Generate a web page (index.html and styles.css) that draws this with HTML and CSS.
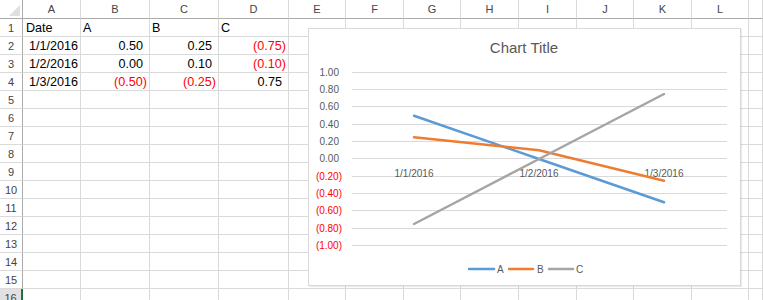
FILE: index.html
```html
<!DOCTYPE html>
<html>
<head>
<meta charset="utf-8">
<link rel="stylesheet" href="styles.css">
</head>
<body>
<div class="sheet">
  <div class="grid">
    <div class="corner"></div><div class="ch">A</div><div class="ch">B</div><div class="ch">C</div><div class="ch">D</div><div class="ch">E</div><div class="ch">F</div><div class="ch">G</div><div class="ch">H</div><div class="ch">I</div><div class="ch">J</div><div class="ch">K</div><div class="ch">L</div><div class="ch"></div>

    <div class="rh">1</div><div class="c l">Date</div><div class="c l tight">A</div><div class="c l tight">B</div><div class="c l tight">C</div><div class="c"></div><div class="c"></div><div class="c"></div><div class="c"></div><div class="c"></div><div class="c"></div><div class="c"></div><div class="c"></div><div class="c"></div>

    <div class="rh">2</div><div class="c r">1/1/2016</div><div class="c r pos">0.50</div><div class="c r pos">0.25</div><div class="c r neg">(0.75)</div><div class="c"></div><div class="c"></div><div class="c"></div><div class="c"></div><div class="c"></div><div class="c"></div><div class="c"></div><div class="c"></div><div class="c"></div>

    <div class="rh">3</div><div class="c r">1/2/2016</div><div class="c r pos">0.00</div><div class="c r pos">0.10</div><div class="c r neg">(0.10)</div><div class="c"></div><div class="c"></div><div class="c"></div><div class="c"></div><div class="c"></div><div class="c"></div><div class="c"></div><div class="c"></div><div class="c"></div>

    <div class="rh">4</div><div class="c r">1/3/2016</div><div class="c r neg">(0.50)</div><div class="c r neg">(0.25)</div><div class="c r pos">0.75</div><div class="c"></div><div class="c"></div><div class="c"></div><div class="c"></div><div class="c"></div><div class="c"></div><div class="c"></div><div class="c"></div><div class="c"></div>

    <div class="rh">5</div><div class="c"></div><div class="c"></div><div class="c"></div><div class="c"></div><div class="c"></div><div class="c"></div><div class="c"></div><div class="c"></div><div class="c"></div><div class="c"></div><div class="c"></div><div class="c"></div><div class="c"></div>
    <div class="rh">6</div><div class="c"></div><div class="c"></div><div class="c"></div><div class="c"></div><div class="c"></div><div class="c"></div><div class="c"></div><div class="c"></div><div class="c"></div><div class="c"></div><div class="c"></div><div class="c"></div><div class="c"></div>
    <div class="rh">7</div><div class="c"></div><div class="c"></div><div class="c"></div><div class="c"></div><div class="c"></div><div class="c"></div><div class="c"></div><div class="c"></div><div class="c"></div><div class="c"></div><div class="c"></div><div class="c"></div><div class="c"></div>
    <div class="rh">8</div><div class="c"></div><div class="c"></div><div class="c"></div><div class="c"></div><div class="c"></div><div class="c"></div><div class="c"></div><div class="c"></div><div class="c"></div><div class="c"></div><div class="c"></div><div class="c"></div><div class="c"></div>
    <div class="rh">9</div><div class="c"></div><div class="c"></div><div class="c"></div><div class="c"></div><div class="c"></div><div class="c"></div><div class="c"></div><div class="c"></div><div class="c"></div><div class="c"></div><div class="c"></div><div class="c"></div><div class="c"></div>
    <div class="rh">10</div><div class="c"></div><div class="c"></div><div class="c"></div><div class="c"></div><div class="c"></div><div class="c"></div><div class="c"></div><div class="c"></div><div class="c"></div><div class="c"></div><div class="c"></div><div class="c"></div><div class="c"></div>
    <div class="rh">11</div><div class="c"></div><div class="c"></div><div class="c"></div><div class="c"></div><div class="c"></div><div class="c"></div><div class="c"></div><div class="c"></div><div class="c"></div><div class="c"></div><div class="c"></div><div class="c"></div><div class="c"></div>
    <div class="rh">12</div><div class="c"></div><div class="c"></div><div class="c"></div><div class="c"></div><div class="c"></div><div class="c"></div><div class="c"></div><div class="c"></div><div class="c"></div><div class="c"></div><div class="c"></div><div class="c"></div><div class="c"></div>
    <div class="rh">13</div><div class="c"></div><div class="c"></div><div class="c"></div><div class="c"></div><div class="c"></div><div class="c"></div><div class="c"></div><div class="c"></div><div class="c"></div><div class="c"></div><div class="c"></div><div class="c"></div><div class="c"></div>
    <div class="rh">14</div><div class="c"></div><div class="c"></div><div class="c"></div><div class="c"></div><div class="c"></div><div class="c"></div><div class="c"></div><div class="c"></div><div class="c"></div><div class="c"></div><div class="c"></div><div class="c"></div><div class="c"></div>
    <div class="rh">15</div><div class="c"></div><div class="c"></div><div class="c"></div><div class="c"></div><div class="c"></div><div class="c"></div><div class="c"></div><div class="c"></div><div class="c"></div><div class="c"></div><div class="c"></div><div class="c"></div><div class="c"></div>
    <div class="rh sel">16</div><div class="c"></div><div class="c"></div><div class="c"></div><div class="c"></div><div class="c"></div><div class="c"></div><div class="c"></div><div class="c"></div><div class="c"></div><div class="c"></div><div class="c"></div><div class="c"></div><div class="c"></div>
  </div>

  <div class="chart">
    <svg class="chart-svg" width="431" height="256" viewBox="0 0 431 256">
      <text class="title" x="215" y="23.5" text-anchor="middle">Chart Title</text>
      <g class="gridlines">
        <line x1="43" x2="418" y1="43.5" y2="43.5"/>
        <line x1="43" x2="418" y1="60.5" y2="60.5"/>
        <line x1="43" x2="418" y1="77.5" y2="77.5"/>
        <line x1="43" x2="418" y1="95.5" y2="95.5"/>
        <line x1="43" x2="418" y1="112.5" y2="112.5"/>
        <line x1="43" x2="418" y1="129.5" y2="129.5"/>
        <line x1="43" x2="418" y1="147.5" y2="147.5"/>
        <line x1="43" x2="418" y1="164.5" y2="164.5"/>
        <line x1="43" x2="418" y1="181.5" y2="181.5"/>
        <line x1="43" x2="418" y1="199.5" y2="199.5"/>
        <line x1="43" x2="418" y1="216.5" y2="216.5"/>
      </g>
      <g class="axis">
        <text x="30" y="47">1.00</text>
        <text x="30" y="64">0.80</text>
        <text x="30" y="81">0.60</text>
        <text x="30" y="99">0.40</text>
        <text x="30" y="116">0.20</text>
        <text x="30" y="133">0.00</text>
        <text class="negt" x="33" y="151">(0.20)</text>
        <text class="negt" x="33" y="168">(0.40)</text>
        <text class="negt" x="33" y="185">(0.60)</text>
        <text class="negt" x="33" y="203">(0.80)</text>
        <text class="negt" x="33" y="220">(1.00)</text>
      </g>
      <g class="cats">
        <text x="105" y="147.5">1/1/2016</text>
        <text x="230" y="147.5">1/2/2016</text>
        <text x="355" y="147.5">1/3/2016</text>
      </g>
      <polyline class="s-a" points="105,86.7 230,130 355,173.3"/>
      <polyline class="s-b" points="105,108.3 230,121.3 355,151.7"/>
      <polyline class="s-c" points="105,195 230,130 355,65"/>
      <g class="legend">
        <line class="s-a" x1="160" x2="185" y1="240" y2="240"/>
        <text x="188" y="243.6">A</text>
        <line class="s-b" x1="200" x2="224" y1="240" y2="240"/>
        <text x="228" y="243.6">B</text>
        <line class="s-c" x1="240" x2="264" y1="240" y2="240"/>
        <text x="267" y="243.6">C</text>
      </g>
    </svg>
  </div>
</div>
</body>
</html>
```

FILE: styles.css
```css
html, body {
  margin: 0;
  padding: 0;
  background: #ffffff;
  overflow: hidden;
}

.sheet {
  position: relative;
  width: 763px;
  height: 300px;
  overflow: hidden;
  font-family: "Liberation Sans", Arial, sans-serif;
}

.grid {
  display: grid;
  grid-template-columns: 23px 58px 69px 69px 70px 57px 58px 57px 58px 58px 57px 58px 57px 1fr;
  grid-template-rows: 19px;
  grid-auto-rows: 18px;
}

.grid > div {
  box-sizing: border-box;
  border-right: 1px solid #dadada;
  border-bottom: 1px solid #dadada;
  white-space: nowrap;
  overflow: hidden;
}

.corner {
  position: relative;
  border-right: 1px solid #ababab !important;
  border-bottom: 1px solid #ababab !important;
}

.corner::after {
  content: "";
  position: absolute;
  right: 2px;
  bottom: 2px;
  width: 0;
  height: 0;
  border-left: 11px solid transparent;
  border-bottom: 11px solid #dfdfdf;
}

.ch {
  border-bottom: 1px solid #ababab !important;
  border-right: 1px solid #dadada;
  color: #444444;
  font-size: 11px;
  line-height: 18px;
  text-align: center;
}

.rh {
  border-right: 1px solid #ababab !important;
  border-bottom: 1px solid #dadada;
  color: #444444;
  font-size: 11px;
  line-height: 18px;
  text-align: center;
}

.rh.sel {
  background: #e1e1e1;
  border-right: 2px solid #217346 !important;
  color: #444444;
}

.c {
  color: #000000;
  font-size: 12.6px;
  line-height: 18px;
  padding: 0 2px 0 3px;
}

.c.l {
  text-align: left;
}

.c.tight {
  padding-left: 2px;
}

.c.r {
  text-align: right;
}

.c.pos {
  padding-right: 6px;
}

.c.neg {
  color: #ff0000;
}

.chart {
  position: absolute;
  left: 308px;
  top: 28px;
  width: 431px;
  height: 256px;
  border: 1px solid #d9d9d9;
  background: #ffffff;
  box-shadow: 1px 1px 1px rgba(0, 0, 0, 0.08);
}

.chart-svg {
  display: block;
  font-family: "Liberation Sans", Arial, sans-serif;
}

.title {
  font-size: 15px;
  fill: #595959;
}

.gridlines line {
  stroke: #d9d9d9;
  stroke-width: 1;
}

.axis text {
  font-size: 10px;
  fill: #595959;
  text-anchor: end;
}

.axis text.negt {
  fill: #ff0000;
}

.cats text {
  font-size: 10px;
  fill: #595959;
  text-anchor: middle;
}

.legend text {
  font-size: 10px;
  fill: #595959;
}

.s-a, .s-b, .s-c {
  fill: none;
  stroke-width: 2.5;
  stroke-linecap: round;
  stroke-linejoin: round;
}

.s-a { stroke: #5b9bd5; }
.s-b { stroke: #ed7d31; }
.s-c { stroke: #a5a5a5; }
```
